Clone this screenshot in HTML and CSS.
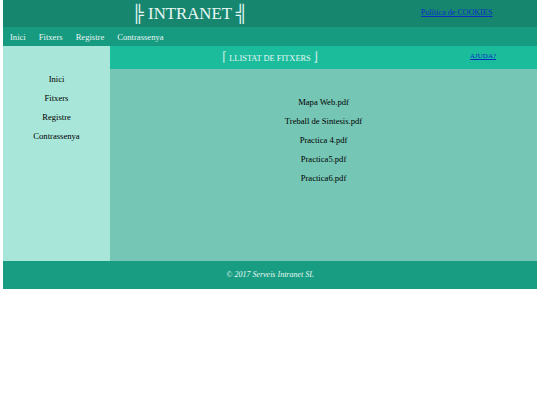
FILE: index.html
```html
<!DOCTYPE html>
<html lang="ca">

<head>
  <meta charset="UTF-8" />
  <title>Intranet</title>
  <link rel="stylesheet" href="styles.css">
</head>

<body>
  <div class="pagina">
    <header>
      <h1>╠ INTRANET ╣</h1>
      <a class="cookies" href="#">Política de COOKIES</a>
    </header>

    <nav class="menu">
      <a href="#">Inici</a>
      <a href="#">Fitxers</a>
      <a href="#">Registre</a>
      <a href="#">Contrassenya</a>
    </nav>

    <div class="contingut">
      <aside class="lateral">
        <a href="#">Inici</a>
        <a href="#">Fitxers</a>
        <a href="#">Registre</a>
        <a href="#">Contrassenya</a>
      </aside>

      <main>
        <div class="titol">
          <h2><span class="marca">⌈</span> LLISTAT DE FITXERS <span class="marca">⌋</span></h2>
          <a class="ajuda" href="#">AJUDA?</a>
        </div>
        <div class="fitxers">
          <a href="#">Mapa Web.pdf</a>
          <a href="#">Treball de Sintesis.pdf</a>
          <a href="#">Practica 4.pdf</a>
          <a href="#">Practica5.pdf</a>
          <a href="#">Practica6.pdf</a>
        </div>
      </main>
    </div>

    <footer>© 2017 Serveis Intranet SL</footer>
  </div>
</body>

</html>
```

FILE: styles.css
```css
* {
  margin: 0;
  padding: 0;
  box-sizing: border-box;
}

body {
  background-color: white;
  font-family: "Liberation Serif", "Times New Roman", serif;
  font-size: 8.6px;
}

.pagina {
  width: 534px;
  margin-left: 3px;
}

header {
  height: 27px;
  background-color: #17866f;
  display: flex;
  align-items: center;
  position: relative;
  padding-left: 129px;
}

header h1 {
  color: #e8f8f5;
  font-size: 16.8px;
  font-weight: normal;
}

.cookies {
  position: absolute;
  left: 418px;
  top: 8px;
  font-size: 8.1px;
  color: #0b2fc4;
}

.menu {
  height: 19px;
  background-color: #169a80;
  display: flex;
  align-items: center;
  gap: 13px;
  padding-left: 7px;
}

.menu a {
  color: #e8f8f5;
  text-decoration: none;
}

.contingut {
  display: flex;
  height: 215px;
}

.lateral {
  width: 107px;
  background-color: #a8e6d9;
  display: flex;
  flex-direction: column;
  align-items: center;
  gap: 8px;
  padding-top: 28px;
}

.lateral a {
  color: #000;
  text-decoration: none;
  line-height: 11px;
}

main {
  flex: 1;
  background-color: #76c6b5;
}

.titol {
  height: 23px;
  background-color: #1abc9c;
  display: flex;
  align-items: center;
  justify-content: center;
  position: relative;
  padding-right: 107px;
}

.titol h2 {
  color: #e8f8f5;
  font-size: 8.4px;
  font-weight: normal;
  line-height: 12px;
}

.marca {
  font-size: 13px;
  line-height: 12px;
  opacity: 0.8;
}

.ajuda {
  position: absolute;
  left: 360px;
  top: 6px;
  font-size: 7px;
  color: #0b2fc4;
}

.fitxers {
  display: flex;
  flex-direction: column;
  align-items: center;
  gap: 8px;
  padding-top: 28px;
}

.fitxers a {
  color: #000;
  text-decoration: none;
  line-height: 11px;
}

footer {
  height: 28px;
  padding-bottom: 2px;
  background-color: #189d82;
  color: #e8f8f5;
  font-size: 8px;
  font-style: italic;
  display: flex;
  align-items: center;
  justify-content: center;
}
```
